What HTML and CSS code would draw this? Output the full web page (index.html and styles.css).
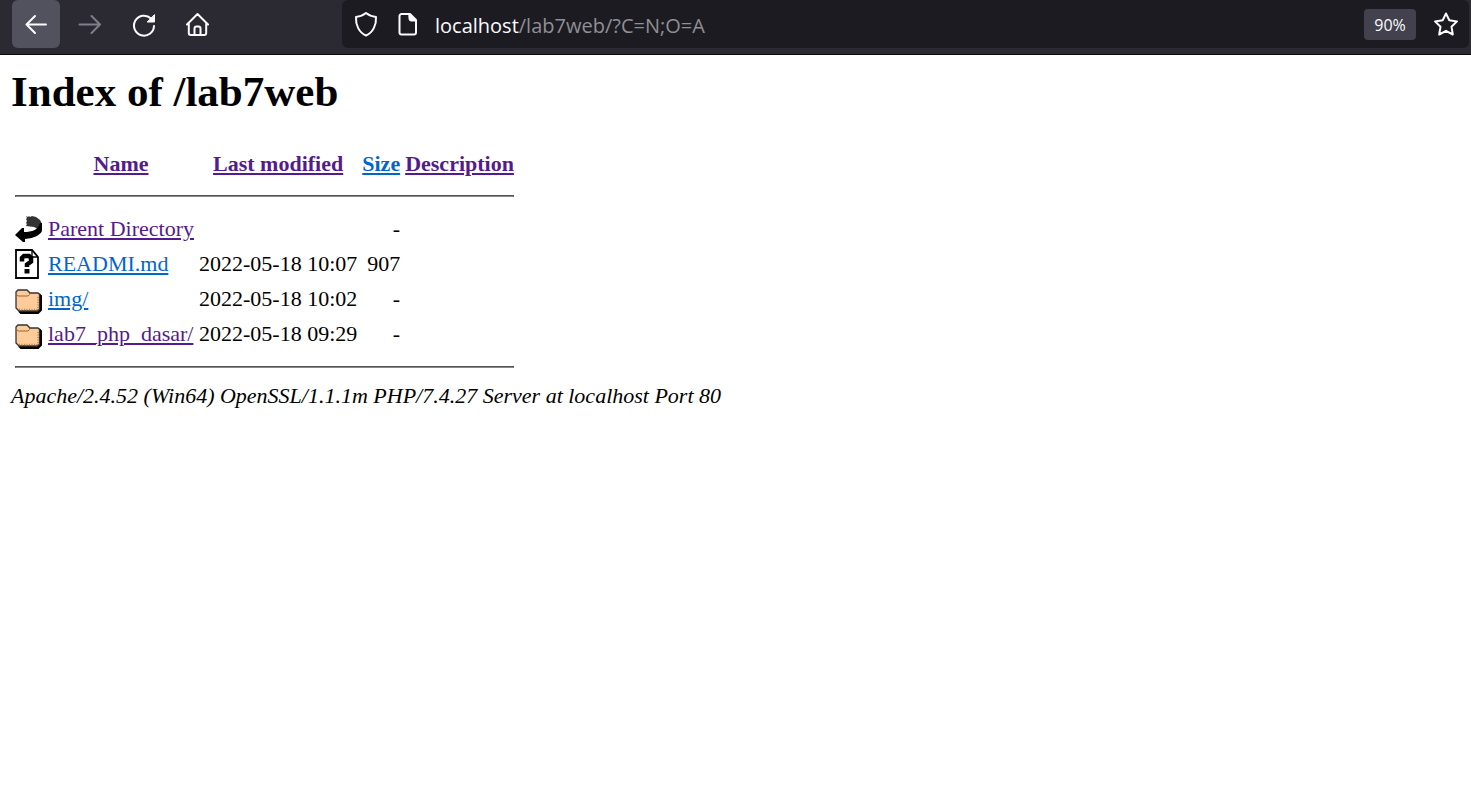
FILE: index.html
```html
<!DOCTYPE html>
<html lang="en">
<head>
<meta charset="utf-8">
<title>Index of /lab7web</title>
<link rel="stylesheet" href="styles.css">
</head>
<body>
<svg class="defs" aria-hidden="true">
  <symbol id="folder" viewBox="0 -6 28 32">
    <path d="M4 22l2 2h17l3-3V7l-2-2" fill="#000" stroke="#000" stroke-width="2" stroke-linejoin="round"/>
    <path d="M1 3l2-2h9l3 3h8l1.500 1.500V20l-2 2H4l-3-3z" fill="#ffcc99" stroke="#333" stroke-width="1.300"/>
    <path d="M2 6l1.500 1H13l1.500-1.500V4" fill="none" stroke="#996633" stroke-width="1"/>
    <path d="M4 20.500h19M23 8v13" fill="none" stroke="#b97c48" stroke-width="1.500" stroke-dasharray="1 1.500"/>
  </symbol>
</svg>
<header class="toolbar">
  <nav class="nav">
    <button class="tool active" aria-label="Back"><svg width="24" height="24" viewBox="0 0 24 24"><path d="M22 12.500H2.500M11 4L2.500 12.500 11 21"/></svg></button>
    <button class="tool muted" aria-label="Forward"><svg width="24" height="24" viewBox="0 0 24 24"><path d="M1.500 12.500H22M13.500 4l8.500 8.500-8.500 8.500"/></svg></button>
    <button class="tool" aria-label="Reload"><svg width="24" height="26" viewBox="0 0 24 26"><path d="M19 7.500A10 10 0 1 0 22 15"/><path class="solid" d="M22.500 4v7H15.500z"/></svg></button>
    <button class="tool" aria-label="Home"><svg width="24" height="24" viewBox="0 0 24 24"><path d="M1 12.500L11.500 2 22 12.500M2.800 11v10a2 2 0 0 0 2 2h13.400a2 2 0 0 0 2-2V11M8.500 23v-6.500a2 2 0 0 1 2-2h2a2 2 0 0 1 2 2V23"/></svg></button>
  </nav>
  <div class="urlbar">
    <button class="mini" aria-label="Site protection"><svg width="24" height="26" viewBox="0 0 24 26"><path d="M12 2c3 2.500 6.500 3.500 10 4 .5 8-3 15.500-10 18.500C5 21.500 1.500 14 2 6c3.500-.5 7-1.500 10-4z"/></svg></button>
    <button class="mini" aria-label="Site information"><svg width="20" height="24" viewBox="0 0 20 24"><path d="M3.500 2H12l6 6v12.500a2 2 0 0 1-2 2H3.500a2 2 0 0 1-2-2V4a2 2 0 0 1 2-2z"/><path class="solid" d="M11 2l7 7h-5a2 2 0 0 1-2-2z"/></svg></button>
    <div class="address"><span class="host">localhost</span>/lab7web/?C=N;O=A</div>
    <button class="zoom">90%</button>
    <button class="mini" aria-label="Bookmark"><svg width="26" height="26" viewBox="0 0 26 26"><path d="M13 2.500l3.300 6.700 7.700 1.200-5.500 5.300 1.300 7.800-6.800-3.700-6.800 3.700 1.300-7.800L2 10.400l7.700-1.200z"/></svg></button>
  </div>
</header>
<main class="page">
  <h1>Index of /lab7web</h1>
  <table class="listing">
    <thead>
    <tr><td></td><th><a class="visited" href="#">Name</a></th><th><a class="visited" href="#">Last modified</a></th><th><a href="#">Size</a></th><th><a class="visited" href="#">Description</a></th></tr>
    <tr><td colspan="5"><hr></td></tr>
    </thead>
    <tbody>
    <tr class="entry">
      <td class="icon"><svg width="28" height="28" viewBox="0 0 28 28" role="img" aria-label="Parent directory"><path d="M11 1l2 1 1-1 1 1 2-1 4 1 4 3 2 4-4 5-4-2-8-1 1-2-1-1 1-2-1-2 1-1z" fill="#333"/><path d="M27 8v8c-2 4-7 7-17 8v3H8L0 20l7-7h2v4c8 0 14-2 16-9z" fill="#000"/></svg></td>
      <td><a class="visited" href="#">Parent Directory</a></td><td></td><td class="size">-</td><td></td></tr>
    <tr class="entry">
      <td class="icon"><svg width="28" height="30" viewBox="0 0 28 30" role="img" aria-label="Unknown file"><path d="M1 1h16l6 7v21H1z" fill="#fff" stroke="#000" stroke-width="1.800"/><path d="M17 1v7h6" fill="none" stroke="#000" stroke-width="1.300"/><path d="M7 12.500V9l2-2h5l2 2v3.500l-4 3v2.500" fill="none" stroke="#000" stroke-width="4.500"/><path d="M9.500 20h5v4.500h-5z" fill="#000"/></svg></td>
      <td><a href="#">READMI.md</a></td><td class="date">2022-05-18 10:07</td><td class="size">907</td><td></td></tr>
    <tr class="entry">
      <td class="icon"><svg width="28" height="32" role="img" aria-label="Folder"><use href="#folder"/></svg></td>
      <td><a href="#">img/</a></td><td class="date">2022-05-18 10:02</td><td class="size">-</td><td></td></tr>
    <tr class="entry">
      <td class="icon"><svg width="28" height="32" role="img" aria-label="Folder"><use href="#folder"/></svg></td>
      <td><a class="visited" href="#">lab7_php_dasar/</a></td><td class="date">2022-05-18 09:29</td><td class="size">-</td><td></td></tr>
    </tbody>
    <tfoot><tr><td colspan="5"><hr></td></tr></tfoot>
  </table>
  <address class="server">Apache/2.4.52 (Win64) OpenSSL/1.1.1m PHP/7.4.27 Server at localhost Port 80</address>
</main>
</body>
</html>
```
FILE: styles.css
```css
* { box-sizing: border-box; }
body {
  margin: 0;
  background: #fff;
  color: #000;
  font: 22px/24px "Liberation Serif", "Times New Roman", serif;
}
.defs { display: none; }
.toolbar {
  display: flex;
  justify-content: space-between;
  height: 55px;
  padding: 0 2px 6px 12px;
  background: #2b2a33;
  border-bottom: 1px solid #0c0c0d;
}
.nav { display: flex; gap: 6px; }
button {
  display: flex;
  align-items: center;
  justify-content: center;
  padding: 0;
  border: 0;
  background: none;
  color: #fbfbfe;
}
button svg {
  fill: none;
  stroke: currentColor;
  stroke-width: 2;
  stroke-linecap: round;
  stroke-linejoin: round;
}
button .solid { fill: currentColor; stroke-width: 1; }
.tool { width: 48px; height: 48px; border-radius: 6px; }
.active { background: #52525e; }
.muted { color: #807f89; }
.urlbar {
  display: flex;
  align-items: center;
  flex: 0 1 1127px;
  height: 48px;
  margin-left: 24px;
  padding: 0 10px 0 12px;
  gap: 20px;
  border-radius: 6px;
  background: #1c1b22;
}
.address {
  flex: 1;
  margin-left: -3px;
  padding-top: 3px;
  color: #8f8f96;
  font: 20px/28px "Open Sans", "Noto Sans", sans-serif;
}
.host { color: #fbfbfe; }
.zoom {
  width: 52px;
  height: 31px;
  padding-top: 1px;
  border-radius: 4px;
  background: #42414d;
  font: 16px/24px "Open Sans", "Noto Sans", sans-serif;
}
.urlbar .zoom { margin-right: -3px; }
.page { padding: 12px 11px; }
h1 { margin: 0 0 29px; font-size: 43px; line-height: 50px; }
.listing { border-spacing: 3px; }
.listing td, .listing th { padding: 1px; }
.listing th { line-height: 28px; }
hr { margin: 12px 0; border: 1px solid #555; border-bottom-color: #888; }
a { color: #0066cc; text-decoration: underline; }
.visited { color: #551a8b; }
.listing .entry { height: 32px; }
.listing .entry td { padding-top: 0; padding-bottom: 0; }
.icon svg { display: block; }
.size { text-align: right; }
.server { font-style: italic; }
```
